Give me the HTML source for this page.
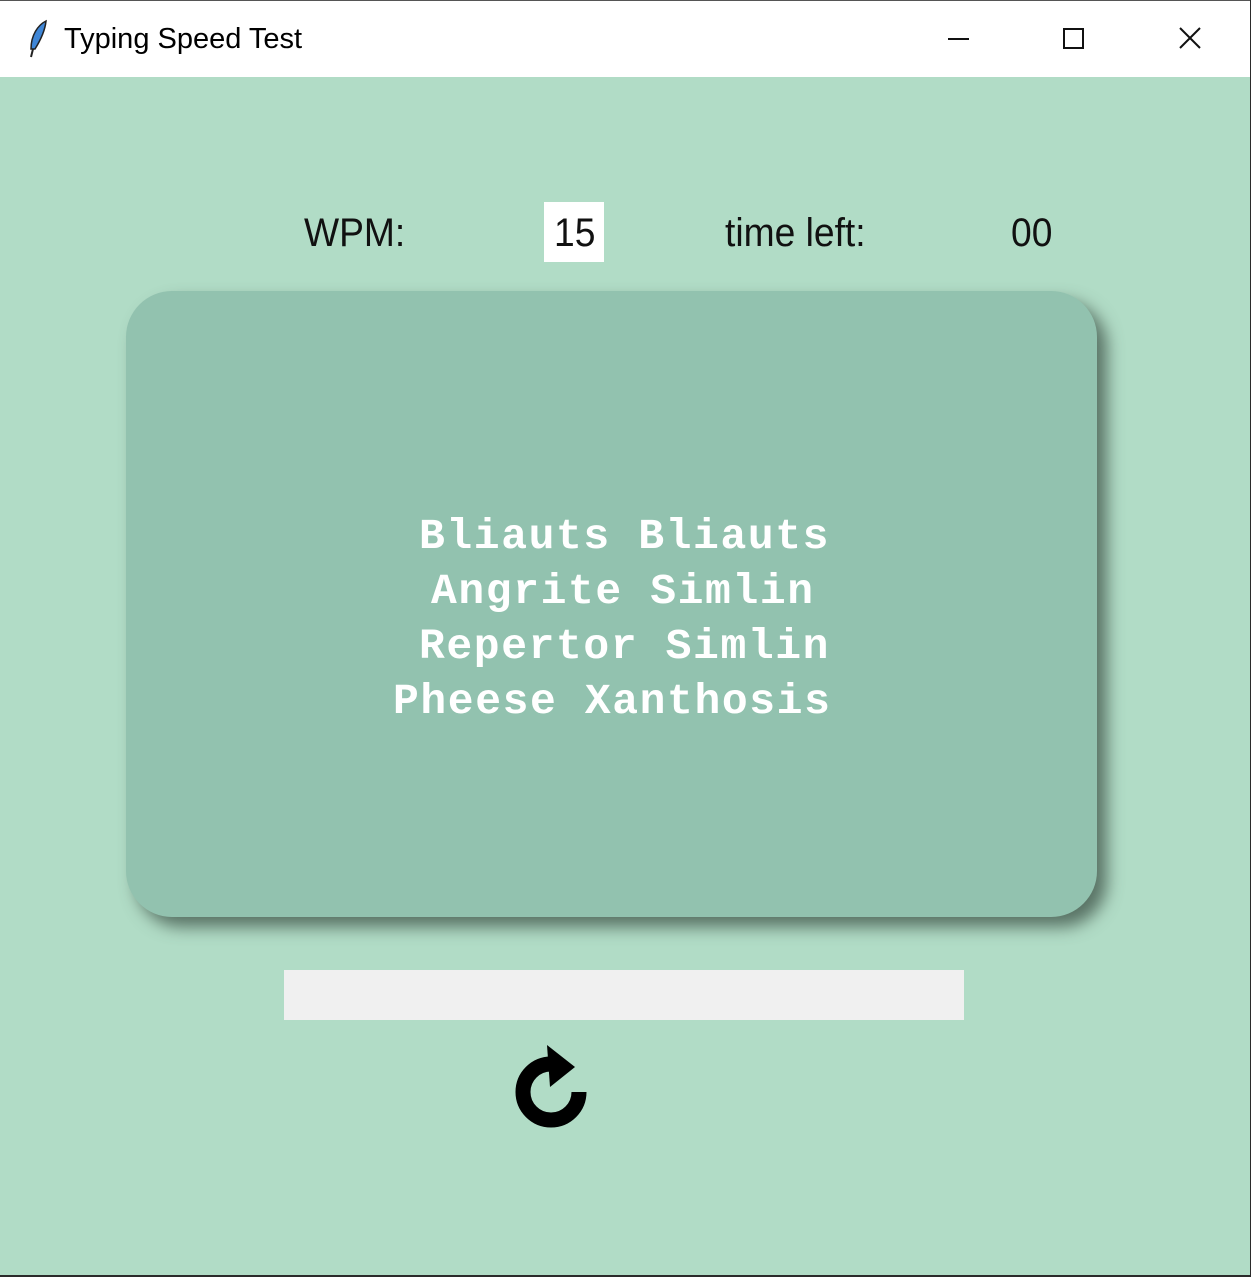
<!DOCTYPE html>
<html><head><style>
body{margin:0;width:1251px;height:1277px;overflow:hidden;background:#2b2b2b;position:relative;font-family:"Liberation Sans",sans-serif}
#win{position:absolute;left:0;top:0;width:1250px;height:1275px;background:#b1dcc6}
#title{position:absolute;left:0;top:0;width:1250px;height:77px;background:#fff;border-top:1px solid #555;box-sizing:border-box}
.t{position:absolute;font-size:29px;color:#000;left:64px;top:22px}
.lbl{position:absolute;font-size:40px;color:#111;transform:scaleX(0.93);transform-origin:left top;top:211px}
#card{position:absolute;left:126px;top:291px;width:971px;height:626px;background:#92c2af;border-radius:46px;box-shadow:10px 10px 16px rgba(60,80,70,.75)}
.w{position:absolute;font-family:"Liberation Mono",monospace;font-weight:bold;color:#fff;font-size:43px;letter-spacing:1.6px;white-space:pre;line-height:1}
</style></head><body>
<div id="win">
<div id="title">
<svg style="position:absolute;left:26px;top:18px" width="26" height="40" viewBox="0 0 26 40"><path d="M20 2 C12 6 5 16 5 30 L9 30 C14 22 19 12 20 2Z" fill="#3f86d6" stroke="#222" stroke-width="1.5"/><path d="M7 30 L5 38" stroke="#222" stroke-width="2"/></svg>
<div class="t">Typing Speed Test</div>
<div style="position:absolute;left:948px;top:37px;width:21px;height:2px;background:#111"></div>
<div style="position:absolute;left:1063px;top:27px;width:17px;height:17px;border:2px solid #111"></div>
<svg style="position:absolute;left:1179px;top:26px" width="22" height="22" viewBox="0 0 22 22"><path d="M1 1L21 21M21 1L1 21" stroke="#111" stroke-width="2"/></svg>
</div>
<div class="lbl" style="left:304px">WPM:</div>
<div style="position:absolute;left:544px;top:202px;width:60px;height:60px;background:#fff"></div>
<div class="lbl" style="left:554px">15</div>
<div class="lbl" style="left:725px">time left:</div>
<div class="lbl" style="left:1011px">00</div>
<div id="card"></div>
<div class="w" style="left:419px;top:515px">Bliauts Bliauts</div>
<div class="w" style="left:431px;top:570px">Angrite Simlin</div>
<div class="w" style="left:419px;top:625px">Repertor Simlin</div>
<div class="w" style="left:393px;top:680px">Pheese Xanthosis</div>
<div style="position:absolute;left:284px;top:970px;width:680px;height:50px;background:#f0f0f0"></div>
<svg style="position:absolute;left:500px;top:1040px" width="100" height="100" viewBox="0 0 100 100">
<path d="M51 24 A28 28 0 1 0 79 52" fill="none" stroke="#000" stroke-width="15"/>
<path d="M47 5 L75 27 L50 47 Z" fill="#000"/>
</svg>
</div>
</body></html>
